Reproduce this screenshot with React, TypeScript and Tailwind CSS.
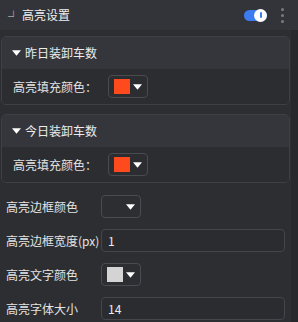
import React from "react";

const font = { fontFamily: '"Noto Sans CJK SC", "Noto Sans", sans-serif' };

// ── small pieces ───────────────────────────────────────────────────────────
function Caret({ className = "" }: { className?: string }) {
  return (
    <svg viewBox="0 0 10 6" className={`h-[6px] w-[9px] ${className}`}>
      <path d="M0 0 L10 0 L5 6 Z" fill="#ffffff" />
    </svg>
  );
}

function ColorPicker({ color }: { color?: string }) {
  return (
    <div className="flex h-[23px] w-[40px] items-center gap-[3px] rounded-[4px] border border-[#4a4b51] pl-[5px]">
      <div className="h-[15px] w-[16px]" style={{ backgroundColor: color ?? "transparent" }} />
      <Caret />
    </div>
  );
}

function TextInput({ value }: { value: string }) {
  return (
    <div className="flex h-[23px] w-[184px] items-center rounded-[4px] border border-[#45464c] bg-[#2b2c30] px-[6px] text-[12px] text-[#ececec]">
      {value}
    </div>
  );
}

function Group({ title, color, first }: { title: string; color: string; first?: boolean }) {
  return (
    <div className={`mx-[1px] ${first ? "" : "mt-[9px]"} w-[289px] overflow-hidden rounded-[5px] border border-[#3f4046]`}>
      <div className="flex h-[32px] items-center gap-[4px] bg-[#35363b] pl-[10px] text-[12px] text-[#ececec]">
        <Caret className="h-[5px] w-[8px]" />
        <span>{title}</span>
      </div>
      <div className="flex h-[35px] items-center bg-[#2c2d31] pl-[11px]">
        <span className="w-[95px] text-[12px] text-[#e4e4e4]">高亮填充颜色：</span>
        <ColorPicker color={color} />
      </div>
    </div>
  );
}

function Row({ label, children }: { label: string; children: React.ReactNode }) {
  return (
    <div className="flex h-[23px] items-center">
      <span className="w-[95px] whitespace-nowrap text-[12px] text-[#e4e4e4]">{label}</span>
      {children}
    </div>
  );
}

export default function App() {
  return (
    <div className="flex h-[322px] w-[298px] flex-col bg-[#2d2e32]" style={font}>
      {/* header */}
      <div className="flex h-[30px] shrink-0 items-center bg-[#33343a] pl-[8px] pr-[14px]">
        <span className="relative top-[1px] mr-[3px] text-[11px] leading-none text-[#d8d8d8]">┘</span>
        <span className="text-[12px] text-[#f0f0f0]">高亮设置</span>
        <div className="ml-auto flex items-center">
          <div className="relative h-[11px] w-[23px] rounded-full bg-[#3c7cf0]">
            <div className="absolute -top-[1px] right-0 flex h-[13px] w-[13px] items-center justify-center rounded-full bg-white">
              <div className="h-[6px] w-[2px] rounded-full bg-[#3c7cf0]" />
            </div>
          </div>
          <div className="ml-[14px] flex flex-col gap-[3px]">
            <span className="h-[3px] w-[3px] rounded-full bg-[#7a7b80]" />
            <span className="h-[3px] w-[3px] rounded-full bg-[#7a7b80]" />
            <span className="h-[3px] w-[3px] rounded-full bg-[#7a7b80]" />
          </div>
        </div>
      </div>

      {/* body */}
      <div className="flex flex-1">
        <div className="flex w-[291px] flex-col pt-[6px]">
          <Group title="昨日装卸车数" color="#ff4a1e" first />
          <Group title="今日装卸车数" color="#ff4a1e" />

          <div className="flex flex-col gap-[11px] pl-[6px] pt-[12px]">
            <Row label="高亮边框颜色">
              <ColorPicker />
            </Row>
            <Row label="高亮边框宽度(px)">
              <TextInput value="1" />
            </Row>
            <Row label="高亮文字颜色">
              <ColorPicker color="#d4d4d4" />
            </Row>
            <Row label="高亮字体大小">
              <TextInput value="14" />
            </Row>
          </div>
        </div>
        <div className="flex-1 bg-[#27282c]" />
      </div>
    </div>
  );
}
